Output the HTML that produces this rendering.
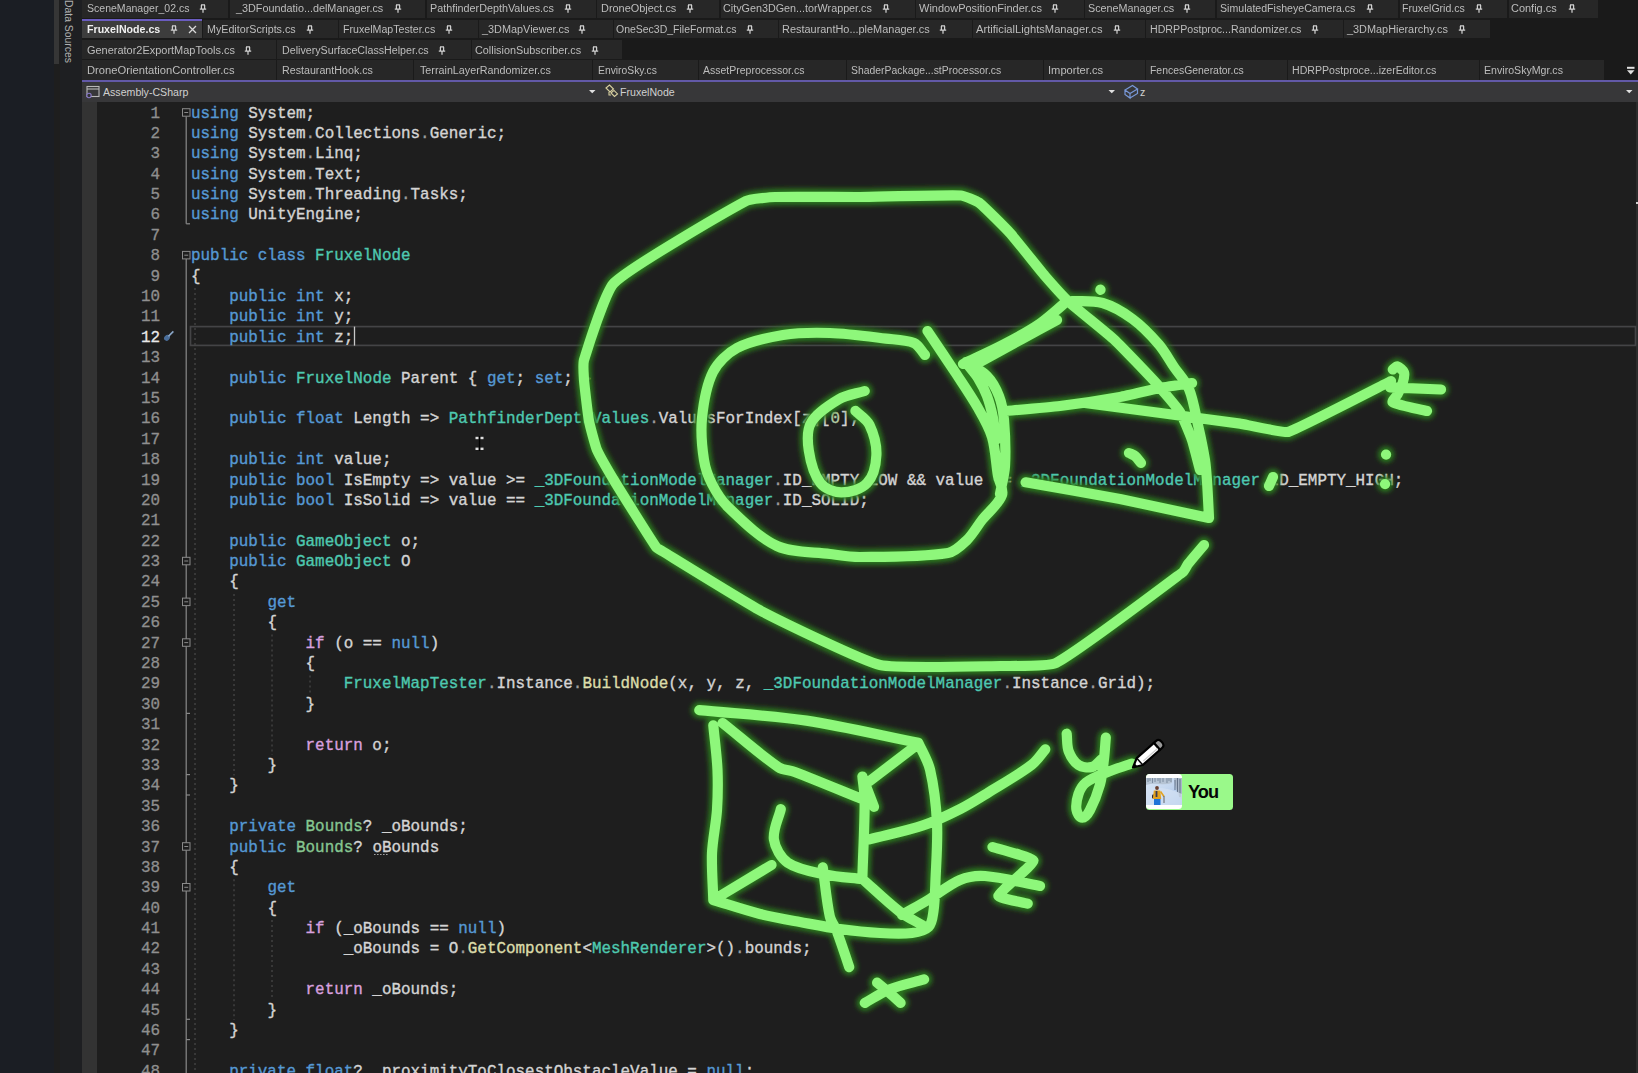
<!DOCTYPE html>
<html><head><meta charset="utf-8"><style>
html,body{margin:0;padding:0;width:1638px;height:1073px;overflow:hidden;background:#1e1e1e;position:relative}
div,span,svg{box-sizing:border-box}
.abs{position:absolute}
.tab{position:absolute;background:#262626}
.tl{position:absolute;font:10.45px/14px "Liberation Sans",sans-serif;color:#bdbdbd;white-space:pre}
.tl.act{font-weight:bold;color:#f0f0f0}
.pin{position:absolute}
.ln{position:absolute;left:191px;font:15.92px/20.39px "Liberation Mono",monospace;white-space:pre;color:#dcdcdc;height:20.39px;-webkit-text-stroke:0.35px currentColor}
.nm{position:absolute;left:110px;width:50px;text-align:right;font:15.92px/20.39px "Liberation Mono",monospace;white-space:pre;height:20.39px;-webkit-text-stroke:0.3px currentColor}
</style></head><body>
<div class="abs" style="left:0;top:0;width:54px;height:1073px;background:#1b1e24"></div>
<div class="abs" style="left:54px;top:0;width:5px;height:63.5px;background:#363636"></div>
<div class="abs" style="left:60px;top:0;width:22px;height:1073px;background:#1e1f22"></div>
<div class="abs" style="left:62px;top:0;width:14px;height:64px;"><div style="position:absolute;left:0;top:0;transform-origin:0 0;transform:translate(0px,0px) rotate(90deg) translate(0,-13px);font:10.4px/13px 'Liberation Sans',sans-serif;color:#b0b0b0;white-space:pre">Data Sources</div></div>
<div class="abs" style="left:82px;top:0;width:1556px;height:82px;background:#1a1a1a"></div>
<div class="tab" style="left:82px;top:0px;width:146px;height:17.5px;background:#272727"></div><span class="tl" style="left:86.6px;top:2.0px;transform:scaleX(1.009);transform-origin:0 0">SceneManager_02.cs</span><svg class="pin" style="left:198.8px;top:4.2px" width="8" height="9" viewBox="0 0 8 9"><path d="M2 0.9h4M2.4 0.9v4.2M5.6 0.9v4.2M0.8 5.1h6.4M4 5.1v3.6" stroke="#d0d0d0" stroke-width="1.25" fill="none"/></svg><div class="tab" style="left:230px;top:0px;width:195px;height:17.5px;background:#272727"></div><span class="tl" style="left:235.9px;top:2.0px;transform:scaleX(1.036);transform-origin:0 0">_3DFoundatio...delManager.cs</span><svg class="pin" style="left:393.8px;top:4.2px" width="8" height="9" viewBox="0 0 8 9"><path d="M2 0.9h4M2.4 0.9v4.2M5.6 0.9v4.2M0.8 5.1h6.4M4 5.1v3.6" stroke="#d0d0d0" stroke-width="1.25" fill="none"/></svg><div class="tab" style="left:427px;top:0px;width:169px;height:17.5px;background:#272727"></div><span class="tl" style="left:430.4px;top:2.0px;transform:scaleX(1.033);transform-origin:0 0">PathfinderDepthValues.cs</span><svg class="pin" style="left:563.8px;top:4.2px" width="8" height="9" viewBox="0 0 8 9"><path d="M2 0.9h4M2.4 0.9v4.2M5.6 0.9v4.2M0.8 5.1h6.4M4 5.1v3.6" stroke="#d0d0d0" stroke-width="1.25" fill="none"/></svg><div class="tab" style="left:597px;top:0px;width:122px;height:17.5px;background:#272727"></div><span class="tl" style="left:601.2px;top:2.0px;transform:scaleX(1.047);transform-origin:0 0">DroneObject.cs</span><svg class="pin" style="left:685.8px;top:4.2px" width="8" height="9" viewBox="0 0 8 9"><path d="M2 0.9h4M2.4 0.9v4.2M5.6 0.9v4.2M0.8 5.1h6.4M4 5.1v3.6" stroke="#d0d0d0" stroke-width="1.25" fill="none"/></svg><div class="tab" style="left:721px;top:0px;width:194px;height:17.5px;background:#272727"></div><span class="tl" style="left:723.3px;top:2.0px;transform:scaleX(1.032);transform-origin:0 0">CityGen3DGen...torWrapper.cs</span><svg class="pin" style="left:881.8px;top:4.2px" width="8" height="9" viewBox="0 0 8 9"><path d="M2 0.9h4M2.4 0.9v4.2M5.6 0.9v4.2M0.8 5.1h6.4M4 5.1v3.6" stroke="#d0d0d0" stroke-width="1.25" fill="none"/></svg><div class="tab" style="left:916px;top:0px;width:168px;height:17.5px;background:#272727"></div><span class="tl" style="left:919.0px;top:2.0px;transform:scaleX(1.054);transform-origin:0 0">WindowPositionFinder.cs</span><svg class="pin" style="left:1050.8px;top:4.2px" width="8" height="9" viewBox="0 0 8 9"><path d="M2 0.9h4M2.4 0.9v4.2M5.6 0.9v4.2M0.8 5.1h6.4M4 5.1v3.6" stroke="#d0d0d0" stroke-width="1.25" fill="none"/></svg><div class="tab" style="left:1085px;top:0px;width:130px;height:17.5px;background:#272727"></div><span class="tl" style="left:1087.5px;top:2.0px;transform:scaleX(1.032);transform-origin:0 0">SceneManager.cs</span><svg class="pin" style="left:1182.8px;top:4.2px" width="8" height="9" viewBox="0 0 8 9"><path d="M2 0.9h4M2.4 0.9v4.2M5.6 0.9v4.2M0.8 5.1h6.4M4 5.1v3.6" stroke="#d0d0d0" stroke-width="1.25" fill="none"/></svg><div class="tab" style="left:1217px;top:0px;width:181px;height:17.5px;background:#272727"></div><span class="tl" style="left:1220.2px;top:2.0px;transform:scaleX(1.015);transform-origin:0 0">SimulatedFisheyeCamera.cs</span><svg class="pin" style="left:1365.8px;top:4.2px" width="8" height="9" viewBox="0 0 8 9"><path d="M2 0.9h4M2.4 0.9v4.2M5.6 0.9v4.2M0.8 5.1h6.4M4 5.1v3.6" stroke="#d0d0d0" stroke-width="1.25" fill="none"/></svg><div class="tab" style="left:1400px;top:0px;width:107px;height:17.5px;background:#272727"></div><span class="tl" style="left:1402.2px;top:2.0px;transform:scaleX(1.013);transform-origin:0 0">FruxelGrid.cs</span><svg class="pin" style="left:1474.8px;top:4.2px" width="8" height="9" viewBox="0 0 8 9"><path d="M2 0.9h4M2.4 0.9v4.2M5.6 0.9v4.2M0.8 5.1h6.4M4 5.1v3.6" stroke="#d0d0d0" stroke-width="1.25" fill="none"/></svg><div class="tab" style="left:1509px;top:0px;width:89px;height:17.5px;background:#272727"></div><span class="tl" style="left:1511.2px;top:2.0px;transform:scaleX(1.050);transform-origin:0 0">Config.cs</span><svg class="pin" style="left:1567.8px;top:4.2px" width="8" height="9" viewBox="0 0 8 9"><path d="M2 0.9h4M2.4 0.9v4.2M5.6 0.9v4.2M0.8 5.1h6.4M4 5.1v3.6" stroke="#d0d0d0" stroke-width="1.25" fill="none"/></svg><div class="tab" style="left:82px;top:20px;width:120px;height:18px;background:#3d3d3d"></div><span class="tl act" style="left:86.6px;top:22.8px;transform:scaleX(1.018);transform-origin:0 0">FruxelNode.cs</span><svg class="pin" style="left:169.8px;top:24.5px" width="8" height="9" viewBox="0 0 8 9"><path d="M2 0.9h4M2.4 0.9v4.2M5.6 0.9v4.2M0.8 5.1h6.4M4 5.1v3.6" stroke="#d0d0d0" stroke-width="1.25" fill="none"/></svg><div class="tab" style="left:203px;top:20px;width:135px;height:18px;background:#272727"></div><span class="tl" style="left:206.6px;top:22.8px;transform:scaleX(1.026);transform-origin:0 0">MyEditorScripts.cs</span><svg class="pin" style="left:305.8px;top:24.5px" width="8" height="9" viewBox="0 0 8 9"><path d="M2 0.9h4M2.4 0.9v4.2M5.6 0.9v4.2M0.8 5.1h6.4M4 5.1v3.6" stroke="#d0d0d0" stroke-width="1.25" fill="none"/></svg><div class="tab" style="left:339px;top:20px;width:139px;height:18px;background:#272727"></div><span class="tl" style="left:343.3px;top:22.8px;transform:scaleX(1.019);transform-origin:0 0">FruxelMapTester.cs</span><svg class="pin" style="left:444.8px;top:24.5px" width="8" height="9" viewBox="0 0 8 9"><path d="M2 0.9h4M2.4 0.9v4.2M5.6 0.9v4.2M0.8 5.1h6.4M4 5.1v3.6" stroke="#d0d0d0" stroke-width="1.25" fill="none"/></svg><div class="tab" style="left:479px;top:20px;width:134px;height:18px;background:#272727"></div><span class="tl" style="left:481.6px;top:22.8px;transform:scaleX(1.042);transform-origin:0 0">_3DMapViewer.cs</span><svg class="pin" style="left:577.8px;top:24.5px" width="8" height="9" viewBox="0 0 8 9"><path d="M2 0.9h4M2.4 0.9v4.2M5.6 0.9v4.2M0.8 5.1h6.4M4 5.1v3.6" stroke="#d0d0d0" stroke-width="1.25" fill="none"/></svg><div class="tab" style="left:614px;top:20px;width:164px;height:18px;background:#272727"></div><span class="tl" style="left:615.9px;top:22.8px;transform:scaleX(1.004);transform-origin:0 0">OneSec3D_FileFormat.cs</span><svg class="pin" style="left:745.8px;top:24.5px" width="8" height="9" viewBox="0 0 8 9"><path d="M2 0.9h4M2.4 0.9v4.2M5.6 0.9v4.2M0.8 5.1h6.4M4 5.1v3.6" stroke="#d0d0d0" stroke-width="1.25" fill="none"/></svg><div class="tab" style="left:779px;top:20px;width:193px;height:18px;background:#272727"></div><span class="tl" style="left:781.9px;top:22.8px;transform:scaleX(1.047);transform-origin:0 0">RestaurantHo...pleManager.cs</span><svg class="pin" style="left:938.8px;top:24.5px" width="8" height="9" viewBox="0 0 8 9"><path d="M2 0.9h4M2.4 0.9v4.2M5.6 0.9v4.2M0.8 5.1h6.4M4 5.1v3.6" stroke="#d0d0d0" stroke-width="1.25" fill="none"/></svg><div class="tab" style="left:973px;top:20px;width:172px;height:18px;background:#272727"></div><span class="tl" style="left:976.4px;top:22.8px;transform:scaleX(1.069);transform-origin:0 0">ArtificialLightsManager.cs</span><svg class="pin" style="left:1112.8px;top:24.5px" width="8" height="9" viewBox="0 0 8 9"><path d="M2 0.9h4M2.4 0.9v4.2M5.6 0.9v4.2M0.8 5.1h6.4M4 5.1v3.6" stroke="#d0d0d0" stroke-width="1.25" fill="none"/></svg><div class="tab" style="left:1146px;top:20px;width:197px;height:18px;background:#272727"></div><span class="tl" style="left:1149.7px;top:22.8px;transform:scaleX(1.019);transform-origin:0 0">HDRPPostproc...Randomizer.cs</span><svg class="pin" style="left:1310.8px;top:24.5px" width="8" height="9" viewBox="0 0 8 9"><path d="M2 0.9h4M2.4 0.9v4.2M5.6 0.9v4.2M0.8 5.1h6.4M4 5.1v3.6" stroke="#d0d0d0" stroke-width="1.25" fill="none"/></svg><div class="tab" style="left:1344px;top:20px;width:146px;height:18px;background:#272727"></div><span class="tl" style="left:1347.1px;top:22.8px;transform:scaleX(1.043);transform-origin:0 0">_3DMapHierarchy.cs</span><svg class="pin" style="left:1457.8px;top:24.5px" width="8" height="9" viewBox="0 0 8 9"><path d="M2 0.9h4M2.4 0.9v4.2M5.6 0.9v4.2M0.8 5.1h6.4M4 5.1v3.6" stroke="#d0d0d0" stroke-width="1.25" fill="none"/></svg><div class="tab" style="left:82px;top:40px;width:194px;height:19px;background:#272727"></div><span class="tl" style="left:86.6px;top:43.5px;transform:scaleX(1.050);transform-origin:0 0">Generator2ExportMapTools.cs</span><svg class="pin" style="left:243.8px;top:45.5px" width="8" height="9" viewBox="0 0 8 9"><path d="M2 0.9h4M2.4 0.9v4.2M5.6 0.9v4.2M0.8 5.1h6.4M4 5.1v3.6" stroke="#d0d0d0" stroke-width="1.25" fill="none"/></svg><div class="tab" style="left:277px;top:40px;width:194px;height:19px;background:#272727"></div><span class="tl" style="left:281.8px;top:43.5px;transform:scaleX(1.023);transform-origin:0 0">DeliverySurfaceClassHelper.cs</span><svg class="pin" style="left:437.8px;top:45.5px" width="8" height="9" viewBox="0 0 8 9"><path d="M2 0.9h4M2.4 0.9v4.2M5.6 0.9v4.2M0.8 5.1h6.4M4 5.1v3.6" stroke="#d0d0d0" stroke-width="1.25" fill="none"/></svg><div class="tab" style="left:472px;top:40px;width:150px;height:19px;background:#272727"></div><span class="tl" style="left:474.7px;top:43.5px;transform:scaleX(1.039);transform-origin:0 0">CollisionSubscriber.cs</span><svg class="pin" style="left:590.8px;top:45.5px" width="8" height="9" viewBox="0 0 8 9"><path d="M2 0.9h4M2.4 0.9v4.2M5.6 0.9v4.2M0.8 5.1h6.4M4 5.1v3.6" stroke="#d0d0d0" stroke-width="1.25" fill="none"/></svg><div class="tab" style="left:82px;top:60px;width:194px;height:20px;background:#272727"></div><span class="tl" style="left:87.1px;top:64.3px;transform:scaleX(1.073);transform-origin:0 0">DroneOrientationController.cs</span><div class="tab" style="left:277px;top:60px;width:136px;height:20px;background:#272727"></div><span class="tl" style="left:281.8px;top:64.3px;transform:scaleX(1.024);transform-origin:0 0">RestaurantHook.cs</span><div class="tab" style="left:414px;top:60px;width:178px;height:20px;background:#272727"></div><span class="tl" style="left:419.6px;top:64.3px;transform:scaleX(1.030);transform-origin:0 0">TerrainLayerRandomizer.cs</span><div class="tab" style="left:593px;top:60px;width:105px;height:20px;background:#272727"></div><span class="tl" style="left:597.6px;top:64.3px;transform:scaleX(0.989);transform-origin:0 0">EnviroSky.cs</span><div class="tab" style="left:699px;top:60px;width:147px;height:20px;background:#272727"></div><span class="tl" style="left:703.3px;top:64.3px;transform:scaleX(1.005);transform-origin:0 0">AssetPreprocessor.cs</span><div class="tab" style="left:847px;top:60px;width:196px;height:20px;background:#272727"></div><span class="tl" style="left:851.3px;top:64.3px;transform:scaleX(0.996);transform-origin:0 0">ShaderPackage...stProcessor.cs</span><div class="tab" style="left:1044px;top:60px;width:101px;height:20px;background:#272727"></div><span class="tl" style="left:1048.4px;top:64.3px;transform:scaleX(1.069);transform-origin:0 0">Importer.cs</span><div class="tab" style="left:1146px;top:60px;width:141px;height:20px;background:#272727"></div><span class="tl" style="left:1150.2px;top:64.3px;transform:scaleX(0.998);transform-origin:0 0">FencesGenerator.cs</span><div class="tab" style="left:1288px;top:60px;width:191px;height:20px;background:#272727"></div><span class="tl" style="left:1292.0px;top:64.3px;transform:scaleX(1.016);transform-origin:0 0">HDRPPostproce...izerEditor.cs</span><div class="tab" style="left:1480px;top:60px;width:124px;height:20px;background:#272727"></div><span class="tl" style="left:1484.3px;top:64.3px;transform:scaleX(1.016);transform-origin:0 0">EnviroSkyMgr.cs</span>
<div class="abs" style="left:82px;top:19px;width:120px;height:2px;background:#6a5cc0"></div>
<div class="abs" style="left:82px;top:80px;width:1556px;height:2px;background:#6259a8"></div>
<div class="abs" style="left:82px;top:82px;width:1556px;height:20px;background:#373739"></div>

<svg class="abs" style="left:0;top:0" width="1638" height="102">
<path d="M189 26 L196 33 M196 26 L189 33" stroke="#d8d8d8" stroke-width="1.3"/>
<rect x="1627" y="66.8" width="7.5" height="2" fill="#e0e0e0"/><path d="M1627 70.3 h7.5 l-3.75 4.2 Z" fill="#e0e0e0"/>
<path d="M589 90 h6.5 l-3.25 3.3 Z M1108.5 90 h6.5 l-3.25 3.3 Z M1626 90 h6.5 l-3.25 3.3 Z" fill="#e0e0e0"/>
<g fill="none" stroke-width="1.1">
<rect x="87" y="86.5" width="12" height="10" stroke="#b8b8b8"/><line x1="87" y1="89" x2="99" y2="89" stroke="#b8b8b8"/>
<circle cx="89" cy="95.5" r="2.2" stroke="#8878c8" fill="#333335"/>
</g>
<g fill="none" stroke="#d8d0a0" stroke-width="1.1">
<path d="M606 88 l3.5 -3 l4 4 l-3.5 3 Z"/><path d="M611 93 l3 -2.6 l3.5 3.5 l-3 2.6 Z"/><path d="M609 92 v3 h2"/>
</g>
<g fill="none" stroke="#7898d8" stroke-width="1.2">
<path d="M1125 90 l7.5 -4.5 l5 3.5 l-7.5 4.5 Z M1125 90 v4.5 l5 3.5 v-4.5 M1130 98 l7.5 -4.5 v-4.5"/>
</g>
</svg>
<span class="abs" style="left:103px;top:85px;font:10.6px/14px 'Liberation Sans',sans-serif;color:#d0d0d0">Assembly-CSharp</span>
<span class="abs" style="left:620px;top:85px;font:10.6px/14px 'Liberation Sans',sans-serif;color:#d0d0d0">FruxelNode</span>
<span class="abs" style="left:1140px;top:85px;font:10.6px/14px 'Liberation Sans',sans-serif;color:#d0d0d0">z</span>
<div class="abs" style="left:82px;top:102px;width:15px;height:971px;background:#333333"></div>
<div class="abs" style="left:97px;top:102px;width:1541px;height:971px;background:#1e1e1e"></div>
<div class="abs" style="left:1636px;top:102px;width:2px;height:971px;background:#2c2c2c"></div><div class="abs" style="left:1636px;top:202px;width:2px;height:2px;background:#d0d0d0"></div>
<div class="nm" style="top:103.50px;color:#8f8f8f">1</div><div class="nm" style="top:123.89px;color:#8f8f8f">2</div><div class="nm" style="top:144.28px;color:#8f8f8f">3</div><div class="nm" style="top:164.67px;color:#8f8f8f">4</div><div class="nm" style="top:185.06px;color:#8f8f8f">5</div><div class="nm" style="top:205.45px;color:#8f8f8f">6</div><div class="nm" style="top:225.84px;color:#8f8f8f">7</div><div class="nm" style="top:246.23px;color:#8f8f8f">8</div><div class="nm" style="top:266.62px;color:#8f8f8f">9</div><div class="nm" style="top:287.01px;color:#8f8f8f">10</div><div class="nm" style="top:307.40px;color:#8f8f8f">11</div><div class="nm" style="top:327.79px;color:#e8e8e8">12</div><div class="nm" style="top:348.18px;color:#8f8f8f">13</div><div class="nm" style="top:368.57px;color:#8f8f8f">14</div><div class="nm" style="top:388.96px;color:#8f8f8f">15</div><div class="nm" style="top:409.35px;color:#8f8f8f">16</div><div class="nm" style="top:429.74px;color:#8f8f8f">17</div><div class="nm" style="top:450.13px;color:#8f8f8f">18</div><div class="nm" style="top:470.52px;color:#8f8f8f">19</div><div class="nm" style="top:490.91px;color:#8f8f8f">20</div><div class="nm" style="top:511.30px;color:#8f8f8f">21</div><div class="nm" style="top:531.69px;color:#8f8f8f">22</div><div class="nm" style="top:552.08px;color:#8f8f8f">23</div><div class="nm" style="top:572.47px;color:#8f8f8f">24</div><div class="nm" style="top:592.86px;color:#8f8f8f">25</div><div class="nm" style="top:613.25px;color:#8f8f8f">26</div><div class="nm" style="top:633.64px;color:#8f8f8f">27</div><div class="nm" style="top:654.03px;color:#8f8f8f">28</div><div class="nm" style="top:674.42px;color:#8f8f8f">29</div><div class="nm" style="top:694.81px;color:#8f8f8f">30</div><div class="nm" style="top:715.20px;color:#8f8f8f">31</div><div class="nm" style="top:735.59px;color:#8f8f8f">32</div><div class="nm" style="top:755.98px;color:#8f8f8f">33</div><div class="nm" style="top:776.37px;color:#8f8f8f">34</div><div class="nm" style="top:796.76px;color:#8f8f8f">35</div><div class="nm" style="top:817.15px;color:#8f8f8f">36</div><div class="nm" style="top:837.54px;color:#8f8f8f">37</div><div class="nm" style="top:857.93px;color:#8f8f8f">38</div><div class="nm" style="top:878.32px;color:#8f8f8f">39</div><div class="nm" style="top:898.71px;color:#8f8f8f">40</div><div class="nm" style="top:919.10px;color:#8f8f8f">41</div><div class="nm" style="top:939.49px;color:#8f8f8f">42</div><div class="nm" style="top:959.88px;color:#8f8f8f">43</div><div class="nm" style="top:980.27px;color:#8f8f8f">44</div><div class="nm" style="top:1000.66px;color:#8f8f8f">45</div><div class="nm" style="top:1021.05px;color:#8f8f8f">46</div><div class="nm" style="top:1041.44px;color:#8f8f8f">47</div><div class="nm" style="top:1061.83px;color:#8f8f8f">48</div>
<svg style="position:absolute;left:0;top:0" width="1638" height="1073"><line x1="186.2" y1="116.2" x2="186.2" y2="223.8" stroke="#8a8a8a" stroke-width="1.2"/><line x1="186.2" y1="223.8" x2="190" y2="223.8" stroke="#8a8a8a" stroke-width="1.2"/><line x1="186.2" y1="258.9" x2="186.2" y2="1073.0" stroke="#8a8a8a" stroke-width="1.2"/><line x1="186.2" y1="713.4" x2="190" y2="713.4" stroke="#8a8a8a" stroke-width="1.2"/><line x1="186.2" y1="774.6" x2="190" y2="774.6" stroke="#8a8a8a" stroke-width="1.2"/><line x1="186.2" y1="795.0" x2="190" y2="795.0" stroke="#8a8a8a" stroke-width="1.2"/><line x1="186.2" y1="1019.3" x2="190" y2="1019.3" stroke="#8a8a8a" stroke-width="1.2"/><line x1="186.2" y1="1039.6" x2="190" y2="1039.6" stroke="#8a8a8a" stroke-width="1.2"/><line x1="195" y1="288.0" x2="195" y2="1073.0" stroke="#4a4a4a" stroke-width="1.2" stroke-dasharray="2 3"/><line x1="234" y1="593.9" x2="234" y2="775.4" stroke="#4a4a4a" stroke-width="1.2" stroke-dasharray="2 3"/><line x1="234" y1="879.3" x2="234" y2="1020.1" stroke="#4a4a4a" stroke-width="1.2" stroke-dasharray="2 3"/><line x1="272" y1="634.6" x2="272" y2="755.0" stroke="#4a4a4a" stroke-width="1.2" stroke-dasharray="2 3"/><line x1="272" y1="920.1" x2="272" y2="999.7" stroke="#4a4a4a" stroke-width="1.2" stroke-dasharray="2 3"/><line x1="310" y1="675.4" x2="310" y2="693.8" stroke="#4a4a4a" stroke-width="1.2" stroke-dasharray="2 3"/><rect x="182.5" y="108.7" width="7.5" height="7.5" fill="#1e1e1e" stroke="#8a8a8a" stroke-width="1"/><line x1="184.3" y1="112.5" x2="188.2" y2="112.5" stroke="#8a8a8a" stroke-width="1"/><rect x="182.5" y="251.4" width="7.5" height="7.5" fill="#1e1e1e" stroke="#8a8a8a" stroke-width="1"/><line x1="184.3" y1="255.2" x2="188.2" y2="255.2" stroke="#8a8a8a" stroke-width="1"/><rect x="182.5" y="557.3" width="7.5" height="7.5" fill="#1e1e1e" stroke="#8a8a8a" stroke-width="1"/><line x1="184.3" y1="561.0" x2="188.2" y2="561.0" stroke="#8a8a8a" stroke-width="1"/><rect x="182.5" y="598.1" width="7.5" height="7.5" fill="#1e1e1e" stroke="#8a8a8a" stroke-width="1"/><line x1="184.3" y1="601.8" x2="188.2" y2="601.8" stroke="#8a8a8a" stroke-width="1"/><rect x="182.5" y="638.8" width="7.5" height="7.5" fill="#1e1e1e" stroke="#8a8a8a" stroke-width="1"/><line x1="184.3" y1="642.6" x2="188.2" y2="642.6" stroke="#8a8a8a" stroke-width="1"/><rect x="182.5" y="842.7" width="7.5" height="7.5" fill="#1e1e1e" stroke="#8a8a8a" stroke-width="1"/><line x1="184.3" y1="846.5" x2="188.2" y2="846.5" stroke="#8a8a8a" stroke-width="1"/><rect x="182.5" y="883.5" width="7.5" height="7.5" fill="#1e1e1e" stroke="#8a8a8a" stroke-width="1"/><line x1="184.3" y1="887.3" x2="188.2" y2="887.3" stroke="#8a8a8a" stroke-width="1"/><rect x="190.5" y="326.6" width="1445" height="18.8" fill="none" stroke="#444446" stroke-width="1.7"/><line x1="354.5" y1="326.6" x2="354.5" y2="345.6" stroke="#c8c8c8" stroke-width="1.3"/><g transform="translate(167,337.8) rotate(-45)"><ellipse cx="0" cy="0" rx="3.2" ry="2.6" fill="#4a6e9a"/><line x1="2" y1="0" x2="9" y2="0" stroke="#8aa6c8" stroke-width="1.6"/></g><line x1="374" y1="854.5" x2="389" y2="854.5" stroke="#a0a0a0" stroke-width="1.1" stroke-dasharray="1.6 1.4"/><g><line x1="479.5" y1="436" x2="479.5" y2="451" stroke="#000" stroke-width="1.4"/><rect x="475.5" y="436.8" width="3" height="2.4" fill="#e0e0e0"/><rect x="480.5" y="436.8" width="3" height="2.4" fill="#e0e0e0"/><rect x="475.5" y="447.6" width="3" height="2.4" fill="#e0e0e0"/><rect x="480.5" y="447.6" width="3" height="2.4" fill="#e0e0e0"/></g></svg>
<div class="ln" style="top:103.50px"><span style="color:#5699d4">using</span><span style="color:#d4d4d4"> System;</span></div><div class="ln" style="top:123.89px"><span style="color:#5699d4">using</span><span style="color:#d4d4d4"> System</span><span style="color:#9c9c9c">.</span><span style="color:#d4d4d4">Collections</span><span style="color:#9c9c9c">.</span><span style="color:#d4d4d4">Generic;</span></div><div class="ln" style="top:144.28px"><span style="color:#5699d4">using</span><span style="color:#d4d4d4"> System</span><span style="color:#9c9c9c">.</span><span style="color:#d4d4d4">Linq;</span></div><div class="ln" style="top:164.67px"><span style="color:#5699d4">using</span><span style="color:#d4d4d4"> System</span><span style="color:#9c9c9c">.</span><span style="color:#d4d4d4">Text;</span></div><div class="ln" style="top:185.06px"><span style="color:#5699d4">using</span><span style="color:#d4d4d4"> System</span><span style="color:#9c9c9c">.</span><span style="color:#d4d4d4">Threading</span><span style="color:#9c9c9c">.</span><span style="color:#d4d4d4">Tasks;</span></div><div class="ln" style="top:205.45px"><span style="color:#5699d4">using</span><span style="color:#d4d4d4"> UnityEngine;</span></div><div class="ln" style="top:225.84px"></div><div class="ln" style="top:246.23px"><span style="color:#5699d4">public class</span> <span style="color:#4ec9b0">FruxelNode</span></div><div class="ln" style="top:266.62px"><span style="color:#d4d4d4">{</span></div><div class="ln" style="top:287.01px">    <span style="color:#5699d4">public int</span><span style="color:#d4d4d4"> x;</span></div><div class="ln" style="top:307.40px">    <span style="color:#5699d4">public int</span><span style="color:#d4d4d4"> y;</span></div><div class="ln" style="top:327.79px">    <span style="color:#5699d4">public int</span><span style="color:#d4d4d4"> z;</span></div><div class="ln" style="top:348.18px"></div><div class="ln" style="top:368.57px">    <span style="color:#5699d4">public</span> <span style="color:#4ec9b0">FruxelNode</span><span style="color:#d4d4d4"> Parent { </span><span style="color:#5699d4">get</span><span style="color:#d4d4d4">; </span><span style="color:#5699d4">set</span><span style="color:#d4d4d4">; }</span></div><div class="ln" style="top:388.96px"></div><div class="ln" style="top:409.35px">    <span style="color:#5699d4">public float</span><span style="color:#d4d4d4"> Length =&gt; </span><span style="color:#4ec9b0">PathfinderDepthValues</span><span style="color:#9c9c9c">.</span><span style="color:#d4d4d4">ValuesForIndex[z][</span><span style="color:#b5cea8">0</span><span style="color:#d4d4d4">];</span></div><div class="ln" style="top:429.74px"></div><div class="ln" style="top:450.13px">    <span style="color:#5699d4">public int</span><span style="color:#d4d4d4"> value;</span></div><div class="ln" style="top:470.52px">    <span style="color:#5699d4">public bool</span><span style="color:#d4d4d4"> IsEmpty =&gt; value &gt;= </span><span style="color:#4ec9b0">_3DFoundationModelManager</span><span style="color:#9c9c9c">.</span><span style="color:#d4d4d4">ID_EMPTY_LOW &amp;&amp; value &lt;= </span><span style="color:#4ec9b0">_3DFoundationModelManager</span><span style="color:#9c9c9c">.</span><span style="color:#d4d4d4">ID_EMPTY_HIGH;</span></div><div class="ln" style="top:490.91px">    <span style="color:#5699d4">public bool</span><span style="color:#d4d4d4"> IsSolid =&gt; value == </span><span style="color:#4ec9b0">_3DFoundationModelManager</span><span style="color:#9c9c9c">.</span><span style="color:#d4d4d4">ID_SOLID;</span></div><div class="ln" style="top:511.30px"></div><div class="ln" style="top:531.69px">    <span style="color:#5699d4">public</span> <span style="color:#4ec9b0">GameObject</span><span style="color:#d4d4d4"> o;</span></div><div class="ln" style="top:552.08px">    <span style="color:#5699d4">public</span> <span style="color:#4ec9b0">GameObject</span><span style="color:#d4d4d4"> O</span></div><div class="ln" style="top:572.47px">    <span style="color:#d4d4d4">{</span></div><div class="ln" style="top:592.86px">        <span style="color:#5699d4">get</span></div><div class="ln" style="top:613.25px">        <span style="color:#d4d4d4">{</span></div><div class="ln" style="top:633.64px">            <span style="color:#d8a0df">if</span><span style="color:#d4d4d4"> (o == </span><span style="color:#5699d4">null</span><span style="color:#d4d4d4">)</span></div><div class="ln" style="top:654.03px">            <span style="color:#d4d4d4">{</span></div><div class="ln" style="top:674.42px">                <span style="color:#4ec9b0">FruxelMapTester</span><span style="color:#9c9c9c">.</span><span style="color:#d4d4d4">Instance</span><span style="color:#9c9c9c">.</span><span style="color:#dcdcaa">BuildNode</span><span style="color:#d4d4d4">(x, y, z, </span><span style="color:#4ec9b0">_3DFoundationModelManager</span><span style="color:#9c9c9c">.</span><span style="color:#d4d4d4">Instance</span><span style="color:#9c9c9c">.</span><span style="color:#d4d4d4">Grid);</span></div><div class="ln" style="top:694.81px">            <span style="color:#d4d4d4">}</span></div><div class="ln" style="top:715.20px"></div><div class="ln" style="top:735.59px">            <span style="color:#d8a0df">return</span><span style="color:#d4d4d4"> o;</span></div><div class="ln" style="top:755.98px">        <span style="color:#d4d4d4">}</span></div><div class="ln" style="top:776.37px">    <span style="color:#d4d4d4">}</span></div><div class="ln" style="top:796.76px"></div><div class="ln" style="top:817.15px">    <span style="color:#5699d4">private</span> <span style="color:#86c691">Bounds</span><span style="color:#d4d4d4">? _oBounds;</span></div><div class="ln" style="top:837.54px">    <span style="color:#5699d4">public</span> <span style="color:#86c691">Bounds</span><span style="color:#d4d4d4">? oBounds</span></div><div class="ln" style="top:857.93px">    <span style="color:#d4d4d4">{</span></div><div class="ln" style="top:878.32px">        <span style="color:#5699d4">get</span></div><div class="ln" style="top:898.71px">        <span style="color:#d4d4d4">{</span></div><div class="ln" style="top:919.10px">            <span style="color:#d8a0df">if</span><span style="color:#d4d4d4"> (_oBounds == </span><span style="color:#5699d4">null</span><span style="color:#d4d4d4">)</span></div><div class="ln" style="top:939.49px">                <span style="color:#d4d4d4">_oBounds = O</span><span style="color:#9c9c9c">.</span><span style="color:#dcdcaa">GetComponent</span><span style="color:#d4d4d4">&lt;</span><span style="color:#4ec9b0">MeshRenderer</span><span style="color:#d4d4d4">&gt;()</span><span style="color:#9c9c9c">.</span><span style="color:#d4d4d4">bounds;</span></div><div class="ln" style="top:959.88px"></div><div class="ln" style="top:980.27px">            <span style="color:#d8a0df">return</span><span style="color:#d4d4d4"> _oBounds;</span></div><div class="ln" style="top:1000.66px">        <span style="color:#d4d4d4">}</span></div><div class="ln" style="top:1021.05px">    <span style="color:#d4d4d4">}</span></div><div class="ln" style="top:1041.44px"></div><div class="ln" style="top:1061.83px">    <span style="color:#5699d4">private float</span><span style="color:#d4d4d4">? _proximityToClosestObstacleValue = </span><span style="color:#5699d4">null</span><span style="color:#d4d4d4">;</span></div>
<svg style="position:absolute;left:0;top:0" width="1638" height="1073" viewBox="0 0 1638 1073">
<defs><filter id="gl" x="-5%" y="-5%" width="110%" height="110%"><feGaussianBlur stdDeviation="2.6"/></filter></defs>
<path d="M1204 545 C1201.7 547.7 1190.2 561.2 1188 564 C1187.2 565.1 1184.1 571.2 1183 572 C1165.1 585.4 1075.9 652.8 1056 663 C1048.9 666.7 1008.0 665.9 1000 666 C982.9 666.2 896.7 668.8 880 665 C862.1 660.9 779.3 620.5 763 612 C748.1 604.2 676.4 559.8 662 551 C661.1 550.5 656.6 547.9 656 547 C649.8 537.9 620.7 491.4 615 482 C612.3 477.5 599.1 454.8 597 450 C595.3 446.0 589.8 425.2 589 421 C587.9 415.2 584.5 385.9 584 380 C583.8 377.2 583.2 362.7 584 360 C587.5 348.7 605.6 291.3 614 283 C629.8 267.4 726.4 211.5 746 201 C749.7 199.0 770.8 197.1 775 197 C787.1 196.6 847.9 197.1 860 197 C874.4 196.9 946.6 194.8 961 195.5 C963.8 195.6 976.8 200.9 979 202.6 C983.9 206.4 1005.9 228.4 1010 233 C1015.3 238.9 1039.9 270.0 1045 276 C1048.3 279.8 1065.3 298.6 1069 302 C1075.2 307.7 1108.4 334.2 1114.6 340 C1120.8 345.8 1150.3 376.7 1156 383 C1159.6 387.0 1177.1 407.5 1180 412 C1182.3 415.7 1190.6 435.9 1192 440 C1193.4 444.2 1198.9 465.7 1200 470 M1072 301 C1081.6 301.6 1093.4 300.3 1102.6 303 C1112.8 306.0 1124.0 312.7 1132.5 319 C1141.8 325.8 1151.5 335.9 1159 344.6 C1164.5 351.0 1169.3 360.0 1174 367 C1178.7 373.9 1185.8 381.3 1189 389 C1193.4 399.7 1195.5 413.7 1198 425 C1200.5 435.9 1203.2 449.0 1205 460 C1206.0 466.5 1206.5 474.4 1207 481 C1207.8 492.6 1208.4 506.4 1209 518 M925 355 C921.6 351.2 918.7 345.0 914 343 C905.8 339.6 894.8 339.6 886 338.6 C868.5 336.5 847.6 333.6 830 333 C815.3 332.5 797.5 332.7 783 335 C768.3 337.4 750.2 341.0 737 348 C727.6 353.0 717.7 362.5 713 372 C706.4 385.2 703.5 403.3 702 418 C700.7 431.1 702.0 447.0 704 460 C705.2 467.8 708.4 477.0 712 484 C716.0 491.8 721.7 501.0 728 507 C742.2 520.5 759.2 537.8 777 546 C792.2 553.0 813.4 551.8 830 554 C839.3 555.2 850.6 557.1 860 557 C887.5 556.8 920.8 557.3 948 553 C955.1 551.9 961.8 545.0 967 540 C972.6 534.6 977.2 526.2 982 520 C988.1 512.1 998.6 504.4 1002 495 C1004.1 489.3 999.0 482.0 998 476 C995.9 463.8 995.5 448.8 992 437 C989.2 427.3 983.0 416.7 978 408 C971.4 396.4 962.3 383.2 955 372 C946.5 359.1 936.1 343.8 927.5 331 M966 362 C972.6 366.4 981.5 370.3 987 376 C992.1 381.2 996.4 389.2 999 396 C1001.8 403.1 1003.3 412.4 1004 420 C1005.2 434.3 1005.8 451.6 1005 466 C1004.5 474.9 1001.6 485.2 1000 494 M968 365 C971.1 369.1 975.3 373.6 978 378 C981.3 383.4 984.8 390.1 987 396 C989.5 402.7 991.6 411.0 993 418 C994.4 424.8 995.1 433.1 996 440 M963 364 C975.5 358.0 990.7 351.2 1003 344.8 C1014.5 338.8 1028.3 331.5 1039 324.2 C1048.0 318.1 1057.6 308.9 1066 302 M980 362 C993.1 354.8 1008.9 346.2 1022 339 C1032.9 333.0 1046.1 325.9 1057 320 M1006 411 C1015.0 410.2 1051.0 407.1 1060 406 C1070.0 404.8 1110.0 398.8 1120 397 C1126.7 395.8 1153.3 389.3 1160 388 C1165.3 387.0 1186.7 383.8 1192 383 M1085 403 C1097.9 404.7 1227.1 421.8 1240 423.6 C1244.0 424.2 1284.1 433.1 1288 432 C1297.2 429.4 1382.4 385.2 1391 381 M1392.8 369.4 C1393.7 368.8 1396.3 366.1 1397.3 366.4 C1399.0 366.9 1403.5 370.7 1404 372.4 C1404.7 374.6 1403.2 381.4 1402.5 383.6 C1401.8 385.9 1398.4 392.5 1397.3 394.7 C1396.5 396.3 1391.3 401.4 1392.8 402.2 C1399.0 405.6 1420.2 409.2 1427 411 M1390 387.3 L1441 389.5 M1025.6 482.3 C1037.4 484.4 1108.2 496.7 1120 499 C1131.2 501.2 1197.9 515.6 1209 518 M864.7 391 C856.7 393.6 846.3 394.9 839.1 399.2 C829.3 405.0 817.0 412.7 811.2 422.5 C806.7 430.1 807.5 441.8 808.8 450.5 C810.4 461.2 813.9 474.6 820.5 483.1 C824.9 488.7 834.3 492.4 841.4 492.4 C849.9 492.4 861.3 489.3 867.1 483.1 C873.4 476.4 876.0 464.3 876.4 455.1 C876.8 445.4 873.6 433.6 869.4 424.8 C866.8 419.2 859.8 415.2 855.4 410.9 M699.3 710.1 C732.8 713.4 773.2 715.6 806.5 720.6 C841.7 725.9 883.4 735.9 918.3 742.8 M918.3 742.8 C922.0 751.1 927.9 760.6 930 769.5 C933.8 785.9 936.2 806.2 937 823 C937.9 840.8 936.2 862.2 935.5 880 C935.1 889.7 934.9 901.4 933.5 911 C932.7 916.2 932.3 923.3 928.6 927 C924.7 930.9 917.5 932.3 912 933 C902.1 934.2 890.0 933.6 880 933 C867.5 932.3 852.4 930.7 840 929 C827.4 927.3 812.5 924.3 800 922 C787.5 919.7 772.4 917.1 760 914 C745.2 910.3 727.9 904.4 713.3 900 M713.3 725.3 C714.6 739.3 716.9 756.0 717.5 770 C718.0 782.5 717.8 797.5 717 810 C716.1 823.5 712.6 839.5 712 853 C711.4 867.7 712.9 885.3 713.3 900 M722.6 723 C740.1 736.8 760.1 754.7 778.5 767.2 C782.9 770.2 789.8 770.0 794.8 771.9 C816.0 780.0 841.0 790.5 862 799 M862.4 776.5 C863.1 783.8 864.7 792.5 864.7 799.8 C864.7 823.8 863.1 852.7 862.4 876.7 M862.4 776.5 L874 806.8 M869.4 781.2 L918.3 743.9 M780.8 809.1 C778.6 818.6 772.6 829.8 773.9 839.4 C775.0 847.8 780.8 857.9 787.8 862.7 C797.9 869.6 813.2 871.8 825.1 874.4 C836.6 876.9 850.7 877.6 862.4 879 M713.3 900 L771.5 865 M862.4 879 C874.0 889.2 887.3 902.2 899.6 911.6 C906.4 916.8 915.7 921.2 923 925.6 M822.8 867.4 C825.0 882.7 826.5 901.2 829.8 916.3 C830.9 921.4 835.0 926.5 836.9 931.3 C841.1 942.4 845.4 955.9 849.2 967.1 M869.4 839.4 C886.1 835.0 906.6 830.9 923 825.4 C935.0 821.4 948.7 814.8 960 809.1 C969.3 804.4 979.8 797.7 988.6 792.3 C1002.2 783.9 1018.9 774.5 1031.6 764.9 C1036.8 761.0 1041.0 754.2 1045.3 749.3 M902 915 C910.1 910.3 920.0 904.8 928 900 C938.1 893.9 949.1 884.6 960 880 C967.3 876.9 977.1 875.4 985 876 C1002.4 877.3 1022.8 882.9 1040 886 M992.5 847 C995.4 848.0 1033.1 857.6 1033.5 860.7 C1033.9 864.2 998.9 892.3 998.4 895.8 C998.1 897.9 1025.6 903.0 1027.7 903.6 M864.8 1002.9 C872.5 998.7 881.2 992.6 889.4 989.4 C899.9 985.2 913.3 982.5 924.1 979.4 M877.1 982.7 C880.9 985.9 885.6 989.6 889.4 992.8 C893.0 995.9 897.1 999.7 900.6 1002.9 M1066.7 733.7 C1067.3 739.2 1066.7 746.1 1068.7 751.3 C1070.6 756.2 1074.1 762.1 1078.5 765 C1082.0 767.4 1087.9 768.1 1092 767 C1095.9 766.0 1098.9 761.5 1102 759 M1105.8 737.6 C1105.2 744.3 1104.8 752.3 1104 759 C1103.0 767.0 1102.1 776.7 1100 784.5 C1097.7 792.8 1094.0 802.4 1090 810 C1088.4 813.0 1085.8 817.7 1082.4 817.7 C1079.3 817.7 1077.0 812.9 1076.5 809.9 C1075.7 805.0 1076.9 798.7 1078.5 794 C1079.9 789.9 1082.6 785.1 1086 782.5 C1091.4 778.3 1099.4 775.3 1105.8 772.7 C1113.8 769.4 1123.8 766.4 1132 763.5 M1100.4 289.6 L1100.5 289.8 M1129 453 C1130.9 453.9 1133.4 454.7 1135 456 C1137.2 457.8 1139.1 460.8 1141 463 M1386 454.5 L1386.1 454.6 M1273 477 L1269 486 M1385 484 L1385.1 484.1 M1192 383 L1192.1 383.1" fill="none" stroke="#2a7a1e" stroke-width="16" stroke-linecap="round" stroke-linejoin="round" filter="url(#gl)"/>
<path d="M1204 545 C1201.7 547.7 1190.2 561.2 1188 564 C1187.2 565.1 1184.1 571.2 1183 572 C1165.1 585.4 1075.9 652.8 1056 663 C1048.9 666.7 1008.0 665.9 1000 666 C982.9 666.2 896.7 668.8 880 665 C862.1 660.9 779.3 620.5 763 612 C748.1 604.2 676.4 559.8 662 551 C661.1 550.5 656.6 547.9 656 547 C649.8 537.9 620.7 491.4 615 482 C612.3 477.5 599.1 454.8 597 450 C595.3 446.0 589.8 425.2 589 421 C587.9 415.2 584.5 385.9 584 380 C583.8 377.2 583.2 362.7 584 360 C587.5 348.7 605.6 291.3 614 283 C629.8 267.4 726.4 211.5 746 201 C749.7 199.0 770.8 197.1 775 197 C787.1 196.6 847.9 197.1 860 197 C874.4 196.9 946.6 194.8 961 195.5 C963.8 195.6 976.8 200.9 979 202.6 C983.9 206.4 1005.9 228.4 1010 233 C1015.3 238.9 1039.9 270.0 1045 276 C1048.3 279.8 1065.3 298.6 1069 302 C1075.2 307.7 1108.4 334.2 1114.6 340 C1120.8 345.8 1150.3 376.7 1156 383 C1159.6 387.0 1177.1 407.5 1180 412 C1182.3 415.7 1190.6 435.9 1192 440 C1193.4 444.2 1198.9 465.7 1200 470 M1072 301 C1081.6 301.6 1093.4 300.3 1102.6 303 C1112.8 306.0 1124.0 312.7 1132.5 319 C1141.8 325.8 1151.5 335.9 1159 344.6 C1164.5 351.0 1169.3 360.0 1174 367 C1178.7 373.9 1185.8 381.3 1189 389 C1193.4 399.7 1195.5 413.7 1198 425 C1200.5 435.9 1203.2 449.0 1205 460 C1206.0 466.5 1206.5 474.4 1207 481 C1207.8 492.6 1208.4 506.4 1209 518 M925 355 C921.6 351.2 918.7 345.0 914 343 C905.8 339.6 894.8 339.6 886 338.6 C868.5 336.5 847.6 333.6 830 333 C815.3 332.5 797.5 332.7 783 335 C768.3 337.4 750.2 341.0 737 348 C727.6 353.0 717.7 362.5 713 372 C706.4 385.2 703.5 403.3 702 418 C700.7 431.1 702.0 447.0 704 460 C705.2 467.8 708.4 477.0 712 484 C716.0 491.8 721.7 501.0 728 507 C742.2 520.5 759.2 537.8 777 546 C792.2 553.0 813.4 551.8 830 554 C839.3 555.2 850.6 557.1 860 557 C887.5 556.8 920.8 557.3 948 553 C955.1 551.9 961.8 545.0 967 540 C972.6 534.6 977.2 526.2 982 520 C988.1 512.1 998.6 504.4 1002 495 C1004.1 489.3 999.0 482.0 998 476 C995.9 463.8 995.5 448.8 992 437 C989.2 427.3 983.0 416.7 978 408 C971.4 396.4 962.3 383.2 955 372 C946.5 359.1 936.1 343.8 927.5 331 M966 362 C972.6 366.4 981.5 370.3 987 376 C992.1 381.2 996.4 389.2 999 396 C1001.8 403.1 1003.3 412.4 1004 420 C1005.2 434.3 1005.8 451.6 1005 466 C1004.5 474.9 1001.6 485.2 1000 494 M968 365 C971.1 369.1 975.3 373.6 978 378 C981.3 383.4 984.8 390.1 987 396 C989.5 402.7 991.6 411.0 993 418 C994.4 424.8 995.1 433.1 996 440 M963 364 C975.5 358.0 990.7 351.2 1003 344.8 C1014.5 338.8 1028.3 331.5 1039 324.2 C1048.0 318.1 1057.6 308.9 1066 302 M980 362 C993.1 354.8 1008.9 346.2 1022 339 C1032.9 333.0 1046.1 325.9 1057 320 M1006 411 C1015.0 410.2 1051.0 407.1 1060 406 C1070.0 404.8 1110.0 398.8 1120 397 C1126.7 395.8 1153.3 389.3 1160 388 C1165.3 387.0 1186.7 383.8 1192 383 M1085 403 C1097.9 404.7 1227.1 421.8 1240 423.6 C1244.0 424.2 1284.1 433.1 1288 432 C1297.2 429.4 1382.4 385.2 1391 381 M1392.8 369.4 C1393.7 368.8 1396.3 366.1 1397.3 366.4 C1399.0 366.9 1403.5 370.7 1404 372.4 C1404.7 374.6 1403.2 381.4 1402.5 383.6 C1401.8 385.9 1398.4 392.5 1397.3 394.7 C1396.5 396.3 1391.3 401.4 1392.8 402.2 C1399.0 405.6 1420.2 409.2 1427 411 M1390 387.3 L1441 389.5 M1025.6 482.3 C1037.4 484.4 1108.2 496.7 1120 499 C1131.2 501.2 1197.9 515.6 1209 518 M864.7 391 C856.7 393.6 846.3 394.9 839.1 399.2 C829.3 405.0 817.0 412.7 811.2 422.5 C806.7 430.1 807.5 441.8 808.8 450.5 C810.4 461.2 813.9 474.6 820.5 483.1 C824.9 488.7 834.3 492.4 841.4 492.4 C849.9 492.4 861.3 489.3 867.1 483.1 C873.4 476.4 876.0 464.3 876.4 455.1 C876.8 445.4 873.6 433.6 869.4 424.8 C866.8 419.2 859.8 415.2 855.4 410.9 M699.3 710.1 C732.8 713.4 773.2 715.6 806.5 720.6 C841.7 725.9 883.4 735.9 918.3 742.8 M918.3 742.8 C922.0 751.1 927.9 760.6 930 769.5 C933.8 785.9 936.2 806.2 937 823 C937.9 840.8 936.2 862.2 935.5 880 C935.1 889.7 934.9 901.4 933.5 911 C932.7 916.2 932.3 923.3 928.6 927 C924.7 930.9 917.5 932.3 912 933 C902.1 934.2 890.0 933.6 880 933 C867.5 932.3 852.4 930.7 840 929 C827.4 927.3 812.5 924.3 800 922 C787.5 919.7 772.4 917.1 760 914 C745.2 910.3 727.9 904.4 713.3 900 M713.3 725.3 C714.6 739.3 716.9 756.0 717.5 770 C718.0 782.5 717.8 797.5 717 810 C716.1 823.5 712.6 839.5 712 853 C711.4 867.7 712.9 885.3 713.3 900 M722.6 723 C740.1 736.8 760.1 754.7 778.5 767.2 C782.9 770.2 789.8 770.0 794.8 771.9 C816.0 780.0 841.0 790.5 862 799 M862.4 776.5 C863.1 783.8 864.7 792.5 864.7 799.8 C864.7 823.8 863.1 852.7 862.4 876.7 M862.4 776.5 L874 806.8 M869.4 781.2 L918.3 743.9 M780.8 809.1 C778.6 818.6 772.6 829.8 773.9 839.4 C775.0 847.8 780.8 857.9 787.8 862.7 C797.9 869.6 813.2 871.8 825.1 874.4 C836.6 876.9 850.7 877.6 862.4 879 M713.3 900 L771.5 865 M862.4 879 C874.0 889.2 887.3 902.2 899.6 911.6 C906.4 916.8 915.7 921.2 923 925.6 M822.8 867.4 C825.0 882.7 826.5 901.2 829.8 916.3 C830.9 921.4 835.0 926.5 836.9 931.3 C841.1 942.4 845.4 955.9 849.2 967.1 M869.4 839.4 C886.1 835.0 906.6 830.9 923 825.4 C935.0 821.4 948.7 814.8 960 809.1 C969.3 804.4 979.8 797.7 988.6 792.3 C1002.2 783.9 1018.9 774.5 1031.6 764.9 C1036.8 761.0 1041.0 754.2 1045.3 749.3 M902 915 C910.1 910.3 920.0 904.8 928 900 C938.1 893.9 949.1 884.6 960 880 C967.3 876.9 977.1 875.4 985 876 C1002.4 877.3 1022.8 882.9 1040 886 M992.5 847 C995.4 848.0 1033.1 857.6 1033.5 860.7 C1033.9 864.2 998.9 892.3 998.4 895.8 C998.1 897.9 1025.6 903.0 1027.7 903.6 M864.8 1002.9 C872.5 998.7 881.2 992.6 889.4 989.4 C899.9 985.2 913.3 982.5 924.1 979.4 M877.1 982.7 C880.9 985.9 885.6 989.6 889.4 992.8 C893.0 995.9 897.1 999.7 900.6 1002.9 M1066.7 733.7 C1067.3 739.2 1066.7 746.1 1068.7 751.3 C1070.6 756.2 1074.1 762.1 1078.5 765 C1082.0 767.4 1087.9 768.1 1092 767 C1095.9 766.0 1098.9 761.5 1102 759 M1105.8 737.6 C1105.2 744.3 1104.8 752.3 1104 759 C1103.0 767.0 1102.1 776.7 1100 784.5 C1097.7 792.8 1094.0 802.4 1090 810 C1088.4 813.0 1085.8 817.7 1082.4 817.7 C1079.3 817.7 1077.0 812.9 1076.5 809.9 C1075.7 805.0 1076.9 798.7 1078.5 794 C1079.9 789.9 1082.6 785.1 1086 782.5 C1091.4 778.3 1099.4 775.3 1105.8 772.7 C1113.8 769.4 1123.8 766.4 1132 763.5 M1100.4 289.6 L1100.5 289.8 M1129 453 C1130.9 453.9 1133.4 454.7 1135 456 C1137.2 457.8 1139.1 460.8 1141 463 M1386 454.5 L1386.1 454.6 M1273 477 L1269 486 M1385 484 L1385.1 484.1 M1192 383 L1192.1 383.1" fill="none" stroke="#8ef77b" stroke-width="10.2" stroke-linecap="round" stroke-linejoin="round"/>
</svg>

<svg style="position:absolute;left:1120px;top:730px" width="50" height="45" viewBox="1120 730 50 45">
<g transform="translate(1133,767.5) rotate(-41.5)">
<path d="M0 0 L9 -4.6 L32 -4.6 L32 4.6 L9 4.6 Z" fill="#fff" stroke="#000" stroke-width="2.2" stroke-linejoin="round"/>
<path d="M0 0 L4 -2.3 L4 2.3 Z" fill="#000"/>
<line x1="9" y1="-4.4" x2="9" y2="4.4" stroke="#000" stroke-width="1.5"/>
<path d="M32 -4.6 L35 -4.6 Q38.5 -4.6 38.5 0 Q38.5 4.6 35 4.6 L32 4.6 Z" fill="#9a9a9a" stroke="#000" stroke-width="2.2"/>
<line x1="12" y1="2" x2="31" y2="2" stroke="#cfcfcf" stroke-width="1.4"/>
</g></svg>
<div style="position:absolute;left:1146px;top:773.5px;width:87px;height:36px;background:#9af98a;border-radius:3.5px"></div>
<div style="position:absolute;left:1146.2px;top:773.7px;width:36px;height:35.2px;background:#fff;border-radius:3.5px;overflow:hidden"></div>
<svg style="position:absolute;left:1146.2px;top:777.8px" width="36" height="27.4" viewBox="0 0 36 27.4">
<defs><linearGradient id="snow" x1="0" y1="0" x2="1" y2="1"><stop offset="0" stop-color="#dce8f6"/><stop offset="0.5" stop-color="#c3d6ef"/><stop offset="1" stop-color="#9cbbe6"/></linearGradient></defs>
<rect width="36" height="27.4" fill="url(#snow)"/>
<path d="M0 0 h26 v5 q-6 2 -13 1 q-7 -1 -13 1 Z" fill="#b6c4d4"/>
<g stroke="#6a7a8e" stroke-width="0.9" opacity="0.85"><path d="M2 0v4M4 0v3M6.5 0v5M9 0v4M12 0v3M14 0v5M17 0v4M21 0v5M23 0v3M25 0v4"/></g>
<path d="M28 0 h8 v22 q-3 -2 -5 -8 q-2 -6 -3 -14 Z" fill="#aab8ca"/>
<g stroke="#5a6a80" stroke-width="0.9"><path d="M29 2v10M31.5 0v14M34 1v18"/></g>
<path d="M0 12 q14 -6 36 4 v11.4 H0 Z" fill="#d6e3f3" opacity="0.7"/>
<rect x="6" y="16.5" width="3" height="4" rx="1" fill="#2a2a3a"/>
<circle cx="11" cy="10" r="1.9" fill="#6a4030"/>
<path d="M7.8 12.5 h6.4 l1 8.5 h-8.4 Z" fill="#e3a21e"/>
<rect x="9.6" y="13" width="1.8" height="6" fill="#3a3a50"/>
<path d="M14.5 13.5 l3.5 5" stroke="#e3a21e" stroke-width="1.6"/>
<path d="M18 18 v7" stroke="#444" stroke-width="0.8"/>
<rect x="8" y="21" width="6.5" height="6.4" fill="#1f74d8"/>
</svg>
<span style="position:absolute;left:1188px;top:782.4px;font:bold 18.2px/20px 'Liberation Sans',sans-serif;color:#050505;letter-spacing:-1px;-webkit-text-stroke:0px">You</span>

</body></html>
